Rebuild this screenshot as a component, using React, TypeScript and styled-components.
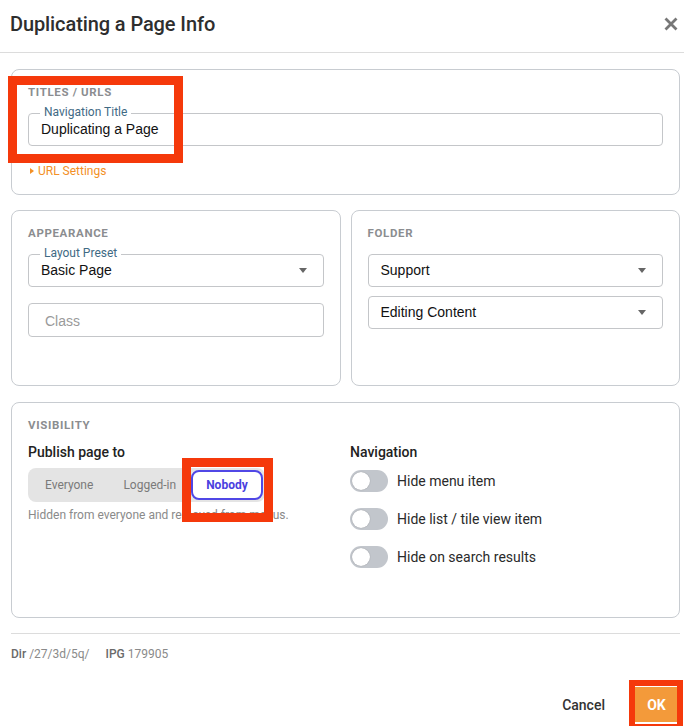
import React from "react";
import styled, { createGlobalStyle } from "styled-components";

const Global = createGlobalStyle`
  html, body { margin: 0; padding: 0; background: #fff; }
  body { font-family: Roboto, "Liberation Sans", Arial, sans-serif; color: #333; overflow: hidden; }
  * { box-sizing: border-box; }
`;

const Dialog = styled.div`
  position: relative;
  width: 684px;
  height: 726px;
  display: flex;
  flex-direction: column;
`;

const Header = styled.div`
  height: 53px;
  border-bottom: 1px solid #dcdcdc;
  display: flex;
  align-items: center;
  justify-content: space-between;
  padding: 0 6px 4px 10px;
`;

const Title = styled.h1`
  margin: 0;
  font-size: 20px;
  font-weight: 500;
  color: #2e2e2e;
  letter-spacing: -0.1px;
`;

const CloseBtn = styled.button`
  border: 0;
  background: none;
  padding: 0;
  width: 14px;
  height: 14px;
  display: flex;
  cursor: pointer;
`;

const Body = styled.div`
  padding: 16px 4px 0 11px;
  display: flex;
  flex-direction: column;
`;

const Card = styled.section<{ $h: number; $mt?: number }>`
  border: 1px solid #c8ccd1;
  border-radius: 8px;
  padding: 15px 16px 0 16px;
  height: ${(p) => p.$h}px;
  margin-top: ${(p) => p.$mt ?? 0}px;
`;

const Row = styled.div`
  display: grid;
  grid-template-columns: 1fr 1fr;
  gap: 10px;
  margin-top: 15px;
`;

const SectionTitle = styled.h2`
  margin: 0;
  font-size: 11.5px;
  line-height: 14px;
  font-weight: 700;
  color: #8b8d90;
  letter-spacing: 0.65px;
  text-transform: uppercase;
`;

const Field = styled.div<{ $mt: number; $h?: number }>`
  position: relative;
  margin-top: ${(p) => p.$mt}px;
  height: ${(p) => p.$h ?? 33}px;
  border: 1px solid #c4c6c9;
  border-radius: 4px;
  display: flex;
  align-items: center;
  padding: 0 16px 1px 12px;
  font-family: "Liberation Sans", Arial, sans-serif;
  font-size: 14px;
  color: #111;
`;

const FloatLabel = styled.span`
  position: absolute;
  top: -9px;
  left: 11px;
  padding: 0 4px;
  background: #fff;
  font-family: Roboto, sans-serif;
  font-size: 12px;
  line-height: 14px;
  color: #3f6a84;
`;

const Value = styled.span`
  flex: 1;
`;

const Placeholder = styled.span`
  flex: 1;
  padding: 2px 0 0 4px;
  color: #9a9a9a;
`;

const Caret = styled.span`
  width: 0;
  height: 0;
  border-left: 4px solid transparent;
  border-right: 4px solid transparent;
  border-top: 5px solid #666;
`;

const Disclosure = styled.div`
  margin-top: 17px;
  display: flex;
  align-items: center;
  gap: 4px;
  padding-left: 2px;
  font-size: 12px;
  line-height: 16px;
  color: #f39026;
`;

const Tri = styled.span`
  width: 0;
  height: 0;
  border-top: 3.5px solid transparent;
  border-bottom: 3.5px solid transparent;
  border-left: 4px solid #f39026;
`;

const VisGrid = styled.div`
  display: grid;
  grid-template-columns: 322px 1fr;
  margin-top: 11px;
`;

const Col = styled.div`
  display: flex;
  flex-direction: column;
`;

const SubHead = styled.h3`
  margin: 0;
  font-size: 14px;
  line-height: 18px;
  font-weight: 500;
  color: #222;
`;

const Segmented = styled.div`
  margin-top: 7px;
  align-self: flex-start;
  display: flex;
  padding: 2px;
  background: #e4e4e4;
  border-radius: 8px;
`;

const Seg = styled.button<{ $active?: boolean }>`
  height: 30px;
  padding: 0 13px;
  border-radius: 8px;
  font-family: Roboto, sans-serif;
  font-size: 12px;
  border: 2px solid ${(p) => (p.$active ? "#5047e6" : "transparent")};
  background: ${(p) => (p.$active ? "#fff" : "transparent")};
  color: ${(p) => (p.$active ? "#4a3fe0" : "#7a7a7a")};
  font-weight: ${(p) => (p.$active ? 700 : 400)};
`;

const Helper = styled.p`
  margin: 6px 0 0;
  font-size: 12px;
  line-height: 14px;
  color: #8a8a8a;
`;

const ToggleList = styled.div`
  margin-top: 9px;
  display: flex;
  flex-direction: column;
  gap: 16px;
`;

const ToggleRow = styled.label`
  display: flex;
  align-items: center;
  gap: 9px;
  font-size: 14px;
  color: #2a2a2a;
`;

const Track = styled.span`
  width: 38px;
  height: 22px;
  border-radius: 11px;
  background: #c2c6cc;
  display: flex;
  align-items: center;
  padding-left: 2px;
`;

const Knob = styled.span`
  width: 18px;
  height: 18px;
  border-radius: 50%;
  background: #fff;
  box-shadow: 0 0 1px rgba(0, 0, 0, 0.35);
`;

const Divider = styled.hr`
  margin: 15px 4px 0 11px;
  border: 0;
  border-top: 1px solid #dcdcdc;
`;

const Meta = styled.div`
  margin: 12px 0 0 11px;
  display: flex;
  gap: 16px;
  font-size: 12px;
  line-height: 16px;
  color: #8a8a8a;
`;

const MetaKey = styled.b`
  font-weight: 500;
  color: #6a6a6a;
  margin-right: 3px;
`;

const Actions = styled.div`
  margin-top: auto;
  padding: 0 6px 4px 0;
  display: flex;
  justify-content: flex-end;
  align-items: center;
  gap: 14px;
`;

const TextBtn = styled.button`
  border: 0;
  background: none;
  padding: 0 16px;
  height: 35px;
  font-family: Roboto, sans-serif;
  font-size: 14px;
  font-weight: 500;
  color: #333;
`;

const OkBtn = styled.button`
  border: 0;
  width: 43px;
  height: 35px;
  background: #f39a3a;
  color: #fff;
  font-family: Roboto, sans-serif;
  font-size: 14px;
  font-weight: 700;
`;

const Highlight = styled.div<{ $x: number; $y: number; $w: number; $h: number; $b: number }>`
  position: absolute;
  left: ${(p) => p.$x}px;
  top: ${(p) => p.$y}px;
  width: ${(p) => p.$w}px;
  height: ${(p) => p.$h}px;
  border: ${(p) => p.$b}px solid #f5390b;
  pointer-events: none;
`;

const toggles = ["Hide menu item", "Hide list / tile view item", "Hide on search results"];

export default function App() {
  return (
    <Dialog>
      <Global />
      <Header>
        <Title>Duplicating a Page Info</Title>
        <CloseBtn aria-label="Close">
          <svg width="14" height="14" viewBox="0 0 14 14">
            <path d="M1.5 1.5 L12.5 12.5 M12.5 1.5 L1.5 12.5" stroke="#777" strokeWidth="2.8" />
          </svg>
        </CloseBtn>
      </Header>
      <Body>
        <Card $h={126}>
          <SectionTitle>Titles / URLs</SectionTitle>
          <Field $mt={14}>
            <FloatLabel>Navigation Title</FloatLabel>
            <Value>Duplicating a Page</Value>
          </Field>
          <Disclosure>
            <Tri />
            URL Settings
          </Disclosure>
        </Card>
        <Row>
          <Card $h={176}>
            <SectionTitle>Appearance</SectionTitle>
            <Field $mt={14}>
              <FloatLabel>Layout Preset</FloatLabel>
              <Value>Basic Page</Value>
              <Caret />
            </Field>
            <Field $mt={16} $h={34}>
              <Placeholder>Class</Placeholder>
            </Field>
          </Card>
          <Card $h={176}>
            <SectionTitle>Folder</SectionTitle>
            <Field $mt={14}>
              <Value>Support</Value>
              <Caret />
            </Field>
            <Field $mt={9}>
              <Value>Editing Content</Value>
              <Caret />
            </Field>
          </Card>
        </Row>
        <Card $h={216} $mt={16}>
          <SectionTitle>Visibility</SectionTitle>
          <VisGrid>
            <Col>
              <SubHead>Publish page to</SubHead>
              <Segmented>
                <Seg>Everyone</Seg>
                <Seg>Logged-in</Seg>
                <Seg $active>Nobody</Seg>
              </Segmented>
              <Helper>Hidden from everyone and removed from menus.</Helper>
            </Col>
            <Col>
              <SubHead>Navigation</SubHead>
              <ToggleList>
                {toggles.map((t) => (
                  <ToggleRow key={t}>
                    <Track>
                      <Knob />
                    </Track>
                    {t}
                  </ToggleRow>
                ))}
              </ToggleList>
            </Col>
          </VisGrid>
        </Card>
      </Body>
      <Divider />
      <Meta>
        <span>
          <MetaKey>Dir</MetaKey>/27/3d/5q/
        </span>
        <span>
          <MetaKey>IPG</MetaKey>179905
        </span>
      </Meta>
      <Actions>
        <TextBtn>Cancel</TextBtn>
        <OkBtn>OK</OkBtn>
      </Actions>
      <Highlight $x={8} $y={76} $w={175} $h={87} $b={9} />
      <Highlight $x={182} $y={458} $w={91} $h={64} $b={9} />
      <Highlight $x={629} $y={680} $w={54} $h={50} $b={6} />
    </Dialog>
  );
}
